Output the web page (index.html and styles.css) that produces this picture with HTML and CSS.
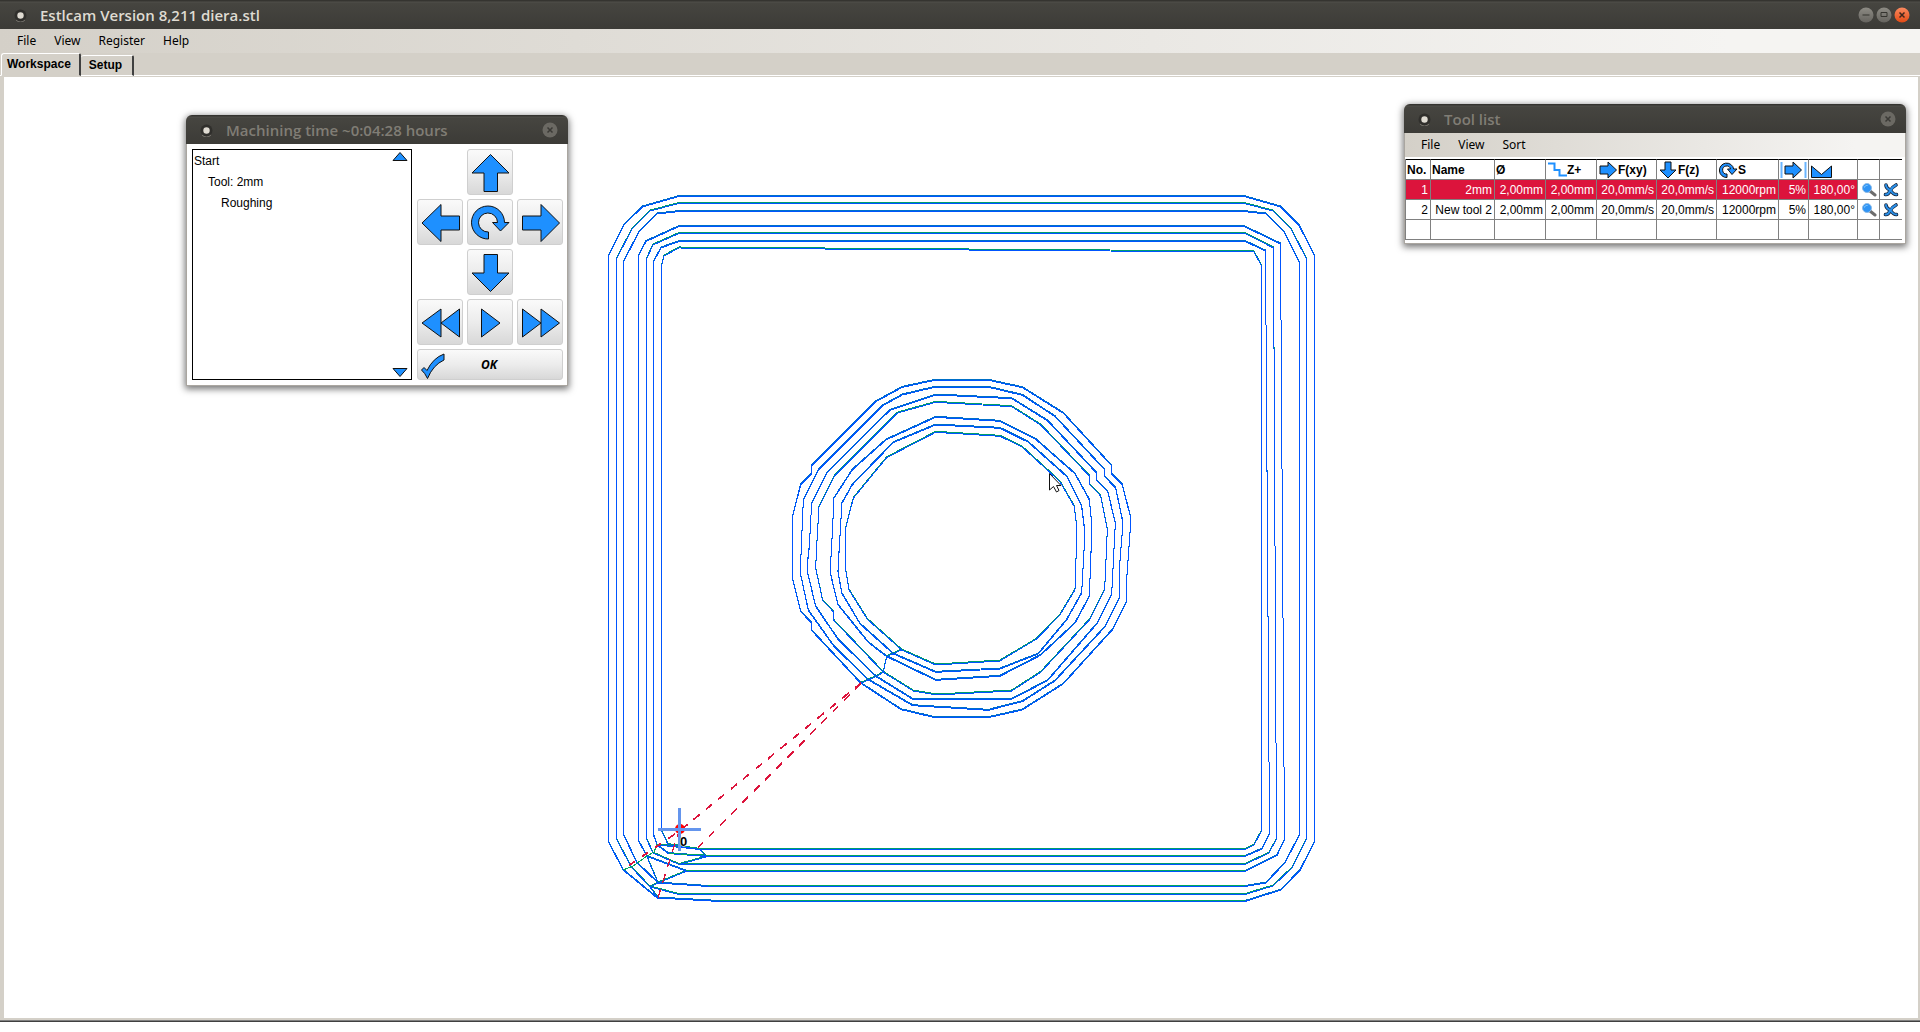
FILE: index.html
```html
<!DOCTYPE html>
<html lang="en">
<head>
<meta charset="utf-8">
<title>Estlcam Version 8,211 diera.stl</title>
<link rel="stylesheet" href="styles.css">
</head>
<body>
<svg class="defs" width="0" height="0" aria-hidden="true">
  <defs>
    <linearGradient id="grey-button" x1="0" y1="0" x2="0" y2="1"><stop offset="0" stop-color="#8d8b84"/><stop offset="1" stop-color="#66645f"/></linearGradient>
    <linearGradient id="red-button" x1="0" y1="0" x2="0" y2="1"><stop offset="0" stop-color="#f98a60"/><stop offset="1" stop-color="#e24a14"/></linearGradient>
    <symbol id="app-dot" viewBox="0 0 13 13"><circle cx="6.5" cy="6.5" r="6" fill="#302f2c"/><path d="M2 11a6 6 0 0 0 9 0" fill="none" stroke="#77746d"/><circle cx="6.5" cy="6.5" r="3.2" fill="#dfdbd2"/></symbol>
    <symbol id="arrow-right" viewBox="0 0 46 46"><path d="M5.500 17H24V5.500L42.500 24 24 42.500V31H5.500Z"/></symbol>
    <symbol id="turn" viewBox="0 0 46 46"><path d="M21.500 40A16.500 16.500 0 1 1 37.500 23.500H42L33.500 32 25.500 23.500H30.500A9.500 9.500 0 1 0 21.500 33Z"/></symbol>
    <symbol id="magnifier" viewBox="0 0 16 16"><path d="M9 9l5 4" stroke="#6d6d6d" stroke-width="3" stroke-linecap="round"/><circle cx="6" cy="6" r="4.500" fill="#2f94f5" stroke="#8dbce8"/><path d="M3.500 5.500a2.500 2 0 0 1 3-2" stroke="#8fd0ff" fill="none"/></symbol>
    <symbol id="delete" viewBox="0 0 16 16"><g fill="none" stroke="#12243c" stroke-width="3.600" stroke-linecap="round"><path d="M3 3Q3 6 7 8 11 13 13.500 12.500"/><path d="M13 3Q9 5 7 9 5 13 2.500 12.500"/></g><g fill="none" stroke="#2a8fe8" stroke-width="2" stroke-linecap="round"><path d="M3 3Q3 6 7 8 11 13 13.500 12.500"/><path d="M13 3Q9 5 7 9 5 13 2.500 12.500"/></g></symbol>
  </defs>
</svg>

<header class="titlebar">
  <svg class="app-dot" aria-hidden="true"><use href="#app-dot"/></svg>
  <h1 class="caption">Estlcam Version 8,211 diera.stl</h1>
  <div class="window-buttons">
    <button aria-label="Minimize"><svg viewBox="0 0 16 16"><circle cx="8" cy="8" r="7.500" fill="url(#grey-button)"/><path d="M4.500 8h7" stroke="#35342f"/></svg></button>
    <button aria-label="Maximize"><svg viewBox="0 0 16 16"><circle cx="8" cy="8" r="7.500" fill="url(#grey-button)"/><path d="M5 5.500h6v4H5z" fill="none" stroke="#35342f"/></svg></button>
    <button aria-label="Close"><svg viewBox="0 0 16 16"><circle cx="8" cy="8" r="7.500" fill="url(#red-button)"/><path d="M5.500 5.500l5 5m0-5l-5 5" stroke="#40261c" stroke-width="1.500"/></svg></button>
  </div>
</header>
<nav class="menubar">
  <button>File</button><button>View</button><button>Register</button><button>Help</button>
</nav>
<div class="tabs" role="tablist">
  <button class="tab selected" role="tab" aria-selected="true">Workspace</button>
  <button class="tab" role="tab" aria-selected="false">Setup</button>
</div>

<main class="workspace">
  <svg class="canvas" role="img" aria-label="Tool paths">
    <defs>
      <g id="square-paths">
        <path class="even" d="M608.500 256L624 225 642.500 207 679 196.500H1244L1280.500 207 1299 225.500 1314.500 256V842L1300 870.500 1281 890 1245 901.500H720L657 898 623 870 608.500 842Z"/>
        <path d="M616.500 259L632 229 650 211 679 203.500H1244L1273 211 1291 229 1306.500 259V839L1292 868 1273 886 1245 894.500H679L650 887 631 867 616.500 839Z"/>
        <path class="even" d="M623.500 262L639 232 657 214 679 211.500H1244L1266 214 1284 232 1299.500 263V835L1285 863 1266 883 1245 886.500H708L658 883 637 863 623.500 835Z"/>
        <path class="even" d="M638.500 256L646 241.500 679 226.500H1244L1280.500 244 1284.500 840 1277 855.500 1245 871.500H687L647 856.500 638.500 841Z"/>
        <path d="M646.500 259L653 245 679 233.500H1245L1273.500 248 1276.500 839 1269 853 1245 864.500H679L653 853 646.500 839Z"/>
        <path class="even" d="M653.500 262L661 248 679 241.500H1245L1265.500 251 1269.500 834 1262 849 1245 856.500H706L668 853.500 657 845 653.500 835Z"/>
        <path d="M661.500 266L664 256 679 248 1254 252 1261.500 266V831L1254 845 1245 849.500H700L668 844.500 661.500 831Z"/>
      </g>
      <g id="circle-paths" transform="translate(770 360) scale(.333333)">
        <path class="even" d="M490 62H660L757 83 880 160 1025 318V342L1057 375 1081 470V505L1070 660V725L1027 810 880 972 757 1050 660 1072H490L393 1049 272 970 125 812V790L92 755 68 660V470L92 375 125 342V318L318 125 397 82Z"/>
        <path class="even" d="M490 83H660L757 106 855 170 1004 330V350L1037 385 1057 480V515L1048 630V715L1006 800 855 963 757 1025 655 1051 428 1037 295 960 192 860 115 752 92 645V610L100 420 147 328 337 138 397 105Z"/>
        <path class="even" d="M113 640L137 740 205 840 318 950 428 1018H725L833 962 982 790 1025 705 1036 490 1013 395 980 362V340L833 183 725 116 497 105 360 151 170 340 125 430 118 560 113 605Z"/>
        <path d="M137 625L158 722 190 755V780L340 937 430 993 500 1005 725 993 812 937 960 778 1004 690 1012 510 992 408 960 375V350L812 195 725 140 497 127 383 159 192 350 147 440 140 560Z"/>
        <path class="even" d="M182 645L204 735 295 848 350 890 497 961 690 949 812 886 915 790 958 710 966 500 958 420 915 342 797 238 690 184 497 172 348 240 247 330 192 415 185 560 182 610Z"/>
        <path class="even" d="M204 635L215 700 270 792 370 882 497 937 690 927 805 882 890 780 935 700 945 520 935 440 890 350 775 247 690 205 497 195 370 248 247 375 216 430 208 560Z"/>
        <path d="M227 630L237 690 292 778 395 870 497 915 690 903 800 837 870 765 915 690 921 510 913 440 870 365 755 260 690 229 497 217 350 293 250 415 227 505Z"/>
        <path d="M395 870L350 890 340 937 318 950 272 970"/>
      </g>
      <g id="link-paths">
        <path d="M706 857L679 864.500M687 871L658 883 650 887 658 898M647 857L658 883M657 845L700 849.500 706 856.500"/>
      </g>
      <g id="rapid-moves">
        <path d="M861 683.500L680 831 623 870"/>
        <path d="M861 684L698 848"/>
        <path d="M658 898L673 850 679 832"/>
      </g>
    </defs>
    <g transform="translate(-4 -77)">
      <g class="pass-under" transform="translate(0 -1)"><use href="#square-paths"/><use href="#circle-paths"/><use href="#link-paths"/></g>
      <g class="pass-over"><use href="#square-paths"/><use href="#circle-paths"/><use href="#link-paths"/></g>
      <path class="pass-lift" d="M720 900.500H1245M708 885.500H1245M687 870.500H1245M706 855.500H1245"/>
      <path class="pass-lift" d="M657 844.500L654 852 647 856 633 866 623 870M669 853.500L704 855"/>
      <g class="rapid"><use href="#rapid-moves"/><use href="#rapid-moves" transform="translate(0 -1)"/></g>
      <circle cx="680" cy="829" r="5" fill="red"/>
      <path d="M658 829.500H701M679.500 808V851" stroke="#6495ed" stroke-width="3"/>
      <text class="origin" x="680" y="846">0</text>
      <path d="M1049.500 473.500V490L1053.500 486.500 1056.500 492 1059 490.500 1056.500 485.500H1061Z" fill="#fff" stroke="#111"/>
    </g>
  </svg>

  <section class="window machining" aria-label="Machining time">
    <header class="titlebar inactive">
      <svg class="app-dot" aria-hidden="true"><use href="#app-dot"/></svg>
      <h2 class="caption">Machining time ~0:04:28 hours</h2>
      <div class="window-buttons"><button aria-label="Close"><svg viewBox="0 0 16 16"><circle cx="8" cy="8" r="7.500" fill="#6b6963"/><path d="M5.500 5.500l5 5m0-5l-5 5" stroke="#3b3a36" stroke-width="1.500"/></svg></button></div>
    </header>
    <div class="machining-body">
      <div class="steps">
        <ul>
          <li>Start</li>
          <li class="level-1">Tool: 2mm</li>
          <li class="level-2">Roughing</li>
        </ul>
        <div class="scroll">
          <button aria-label="Scroll up"><svg viewBox="0 0 16 10"><path d="M1 9.500L8 1.500 15 9.500Z"/></svg></button>
          <button aria-label="Scroll down"><svg viewBox="0 0 16 10"><path d="M1 .500L8 8.500 15 .500Z"/></svg></button>
        </div>
      </div>
      <div class="pad">
        <button class="key up" aria-label="Up"><svg viewBox="0 0 46 46"><path d="M23.500 5.500L42 24H30.500V42.500H17V24H5Z"/></svg></button>
        <button class="key first" aria-label="Left"><svg viewBox="0 0 46 46"><path d="M42.500 17H24V5.500L5 24 24 42.500V31H42.500Z"/></svg></button>
        <button class="key" aria-label="Rotate"><svg><use href="#turn"/></svg></button>
        <button class="key" aria-label="Right"><svg><use href="#arrow-right"/></svg></button>
        <button class="key down" aria-label="Down"><svg viewBox="0 0 46 46"><path d="M17 5.500H30.500V24H42L23.500 42.500 5 24H17Z"/></svg></button>
        <button class="key first" aria-label="Rewind"><svg viewBox="0 0 46 46"><path d="M24 10V38L5 24ZM42.500 10V38L24 24Z"/></svg></button>
        <button class="key" aria-label="Play"><svg viewBox="0 0 46 46"><path d="M14.500 10L33 24 14.500 38Z"/></svg></button>
        <button class="key" aria-label="Fast forward"><svg viewBox="0 0 46 46"><path d="M5.500 10L24 24 5.500 38ZM24 10L42.500 24 24 38Z"/></svg></button>
        <button class="key ok"><svg viewBox="0 0 28 28"><path d="M3.500 19L6 16.500 9 19.500Q15 7 26 3V9Q15 14 9.500 27.500 7 22 3.500 19Z"/></svg>OK</button>
      </div>
    </div>
  </section>

  <section class="window tools" aria-label="Tool list">
    <header class="titlebar inactive">
      <svg class="app-dot" aria-hidden="true"><use href="#app-dot"/></svg>
      <h2 class="caption">Tool list</h2>
      <div class="window-buttons"><button aria-label="Close"><svg viewBox="0 0 16 16"><circle cx="8" cy="8" r="7.500" fill="#6b6963"/><path d="M5.500 5.500l5 5m0-5l-5 5" stroke="#3b3a36" stroke-width="1.500"/></svg></button></div>
    </header>
    <nav class="menubar"><button>File</button><button>View</button><button>Sort</button></nav>
    <table>
      <colgroup><col class="c-no"><col class="c-name"><col class="c-size"><col class="c-size"><col class="c-feed"><col class="c-feed"><col class="c-speed"><col class="c-step"><col class="c-angle"><col class="c-icon"><col class="c-icon"></colgroup>
      <thead>
        <tr>
          <th>No.</th><th>Name</th><th>Ø</th>
          <th><svg class="icon" viewBox="0 0 20 18"><path d="M1 2.500H7.500V9H12.500V14.500H20" fill="none" stroke="#1e90ff" stroke-width="2"/></svg>Z+</th>
          <th><svg class="icon shape" viewBox="0 0 20 18"><path d="M2 5H10V1L18.500 9 10 17V13H2Z"/></svg>F(xy)</th>
          <th><svg class="icon shape" viewBox="0 0 20 18"><path d="M7 1H13V9H18L10 17 2 9H7Z"/></svg>F(z)</th>
          <th><svg class="icon shape" viewBox="0 0 20 18"><path d="M9 16.500A7.200 7.200 0 1 1 15.700 8H19L14 13.500 9.500 8H12.500A4 4 0 1 0 9 13Z"/></svg>S</th>
          <th aria-label="Stepover"><svg class="icon wide" viewBox="0 0 27 18"><path d="M1.500 1V17M25.500 1V17" stroke="#6ab5ff" stroke-width="2"/><path d="M5 5H13V1L21.500 9 13 17V13H5Z" fill="#1e90ff" stroke="#111"/></svg></th>
          <th aria-label="Tip angle"><svg class="icon wide shape" viewBox="0 0 27 18"><path d="M1.500 16.500V5L11.500 13.500 21.500 5V16.500Z"/></svg></th>
          <th></th><th></th>
        </tr>
      </thead>
      <tbody>
        <tr class="current">
          <td>1</td><td>2mm</td><td>2,00mm</td><td>2,00mm</td><td>20,0mm/s</td><td>20,0mm/s</td><td>12000rpm</td><td>5%</td><td>180,00°</td>
          <td class="action"><button aria-label="Show tool 1"><svg><use href="#magnifier"/></svg></button></td><td class="action"><button aria-label="Delete tool 1"><svg><use href="#delete"/></svg></button></td>
        </tr>
        <tr>
          <td>2</td><td>New tool 2</td><td>2,00mm</td><td>2,00mm</td><td>20,0mm/s</td><td>20,0mm/s</td><td>12000rpm</td><td>5%</td><td>180,00°</td>
          <td class="action"><button aria-label="Show tool 2"><svg><use href="#magnifier"/></svg></button></td><td class="action"><button aria-label="Delete tool 2"><svg><use href="#delete"/></svg></button></td>
        </tr>
        <tr><td></td><td></td><td></td><td></td><td></td><td></td><td></td><td></td><td></td><td></td><td></td></tr>
      </tbody>
    </table>
  </section>
</main>
</body>
</html>
```
FILE: styles.css
```css
* { box-sizing: border-box; }

body {
  margin: 0;
  min-height: 100vh;
  padding-bottom: 10px;
  display: flex;
  flex-direction: column;
  background: #fff;
  color: #000;
  font-family: "Liberation Sans", sans-serif;
  font-size: 12px;
}

button {
  margin: 0;
  padding: 0;
  border: 0;
  background: none;
  color: inherit;
  font: inherit;
}

.defs { position: absolute; }

/* title bars */
.titlebar {
  display: flex;
  align-items: center;
  height: 29px;
  padding: 1px 10px 0 14px;
  background: linear-gradient(#353430 0, #353430 1px, #504f4a 2px, #464540 3px, #3c3b37);
  color: #dfdbd2;
}
.app-dot { width: 13px; height: 13px; flex: none; }
.caption {
  margin: 0 auto 0 13px;
  font: 600 15px/20px "Open Sans", sans-serif;
}
.inactive { color: #807d75; border-radius: 6px 6px 0 0; }
.window-buttons { display: flex; gap: 2px; }
.window-buttons button, .window-buttons svg { display: block; width: 16px; height: 16px; }

/* menus */
.menubar {
  display: flex;
  align-items: center;
  gap: 18px;
  height: 24px;
  padding-left: 17px;
  background: linear-gradient(90deg, #d4d0c8, #f5f4f2 90%);
  font: 12px/16px "Noto Sans", sans-serif;
}

/* tabs */
.tabs {
  display: flex;
  align-items: flex-end;
  height: 24px;
  padding-left: 1px;
  background: #d4d0c8;
  border-bottom: 1px solid #d4d0c8;
  box-shadow: inset 0 -1px #fff;
}
.tab {
  height: 21px;
  padding: 0 10px 1px 8px;
  border: solid #fff;
  border-width: 1px 2px 1px 0;
  border-right-color: #404040;
  border-radius: 3px 2px 0 0;
  background: #d4d0c8;
  font-weight: 700;
}
.tab.selected {
  height: 23px;
  padding: 0 8px 1px 5px;
  border-bottom-color: #d4d0c8;
  border-left: 1px solid #fff;
}

/* drawing area */
.workspace {
  position: relative;
  flex: 1;
  display: flex;
  border: solid #d4d0c8;
  border-width: 0 2px 2px 4px;
  box-shadow: 0 1px #808080, 0 2px #404040;
  margin-bottom: 2px;
}
.canvas { flex: 1; min-width: 0; min-height: 700px; display: block; }
.canvas path { vector-effect: non-scaling-stroke; }
.pass-under, .pass-over, .pass-lift, .rapid { fill: none; stroke-width: 1px; shape-rendering: crispEdges; }
.pass-under { stroke: #009e6c; --even: #0070c8; }
.pass-over { stroke: #0055ff; --even: #0055ff; }
.even { stroke: var(--even); }
.pass-lift { stroke: #00a860; }
.rapid { stroke: #dc143c; stroke-dasharray: 8 8; }
.origin { font-size: 13px; font-weight: 700; paint-order: stroke; stroke: #fff; stroke-width: 1px; }

/* floating windows */
.window {
  position: absolute;
  background: #fff;
  border-radius: 6px 6px 0 0;
  box-shadow: 0 2px 7px 1px rgba(0, 0, 0, .55), inset 0 0 0 1px #aaa6a0;
}
.machining { left: 182px; top: 38px; width: 382px; }
.tools { left: 1400px; top: 27px; width: 502px; padding-bottom: 4px; }

.machining-body {
  display: flex;
  gap: 5px;
  padding: 5px 5px 6px 6px;
}
.steps {
  flex: 1;
  display: flex;
  justify-content: space-between;
  border: 1px solid #000;
}
.steps ul { margin: 0; padding: 1px; list-style: none; line-height: 21px; }
.level-1 { padding-left: 14px; }
.level-2 { padding-left: 27px; }
.scroll { display: flex; flex-direction: column; justify-content: space-between; padding: 1px 3px; }
.scroll button, .scroll svg { display: block; width: 16px; height: 10px; }
.scroll svg, .key svg, .shape { fill: #1e90ff; stroke: #111; }

.pad {
  display: grid;
  grid-template-columns: repeat(3, 46px);
  grid-template-rows: repeat(4, 46px) 31px;
  gap: 4px;
}
.key {
  border: 1px solid #cfcfcf;
  border-radius: 3px;
  background: linear-gradient(#fafafa, #ececec 50%, #d8d8d8);
}
.key svg { display: block; width: 46px; height: 46px; margin: -1px; }
.up, .down { grid-column: 2; }
.first { grid-column: 1; }
.ok {
  grid-column: 1 / 4;
  display: grid;
  grid-template-columns: 28px 1fr 30px;
  align-items: center;
  font: italic 700 12px/16px "Open Sans", sans-serif;
}
.ok svg { width: 28px; height: 28px; margin: 0; }

/* tool table */
.tools .menubar { margin: 0 1px 2px; padding-left: 16px; }
table {
  width: 497px;
  margin-left: 1px;
  table-layout: fixed;
  border-collapse: separate;
  border-spacing: 0;
  border-left: 1px solid #808080;
}
.c-no { width: 25px; }
.c-name { width: 64px; }
.c-size { width: 51px; }
.c-feed { width: 60px; }
.c-speed { width: 62px; }
.c-step { width: 30px; }
.c-angle { width: 49px; }
.c-icon { width: 22px; }
th, td {
  height: 20px;
  padding: 0 2px;
  border: solid #808080;
  border-width: 0 1px 1px 0;
  line-height: 18px;
  white-space: nowrap;
}
th:last-child, td:last-child { border-right: 0; }
th { height: 21px; padding: 0 1px; border-top: 1px solid #000; text-align: left; }
td { text-align: right; }
.current td:not(.action) { background: #dc143c; color: #fff; }
.icon { width: 20px; height: 18px; vertical-align: top; }
.wide { width: 27px; }
.action { padding: 0; text-align: center; }
.action button, .action svg { display: block; width: 16px; height: 16px; margin: 0 auto; }
```
